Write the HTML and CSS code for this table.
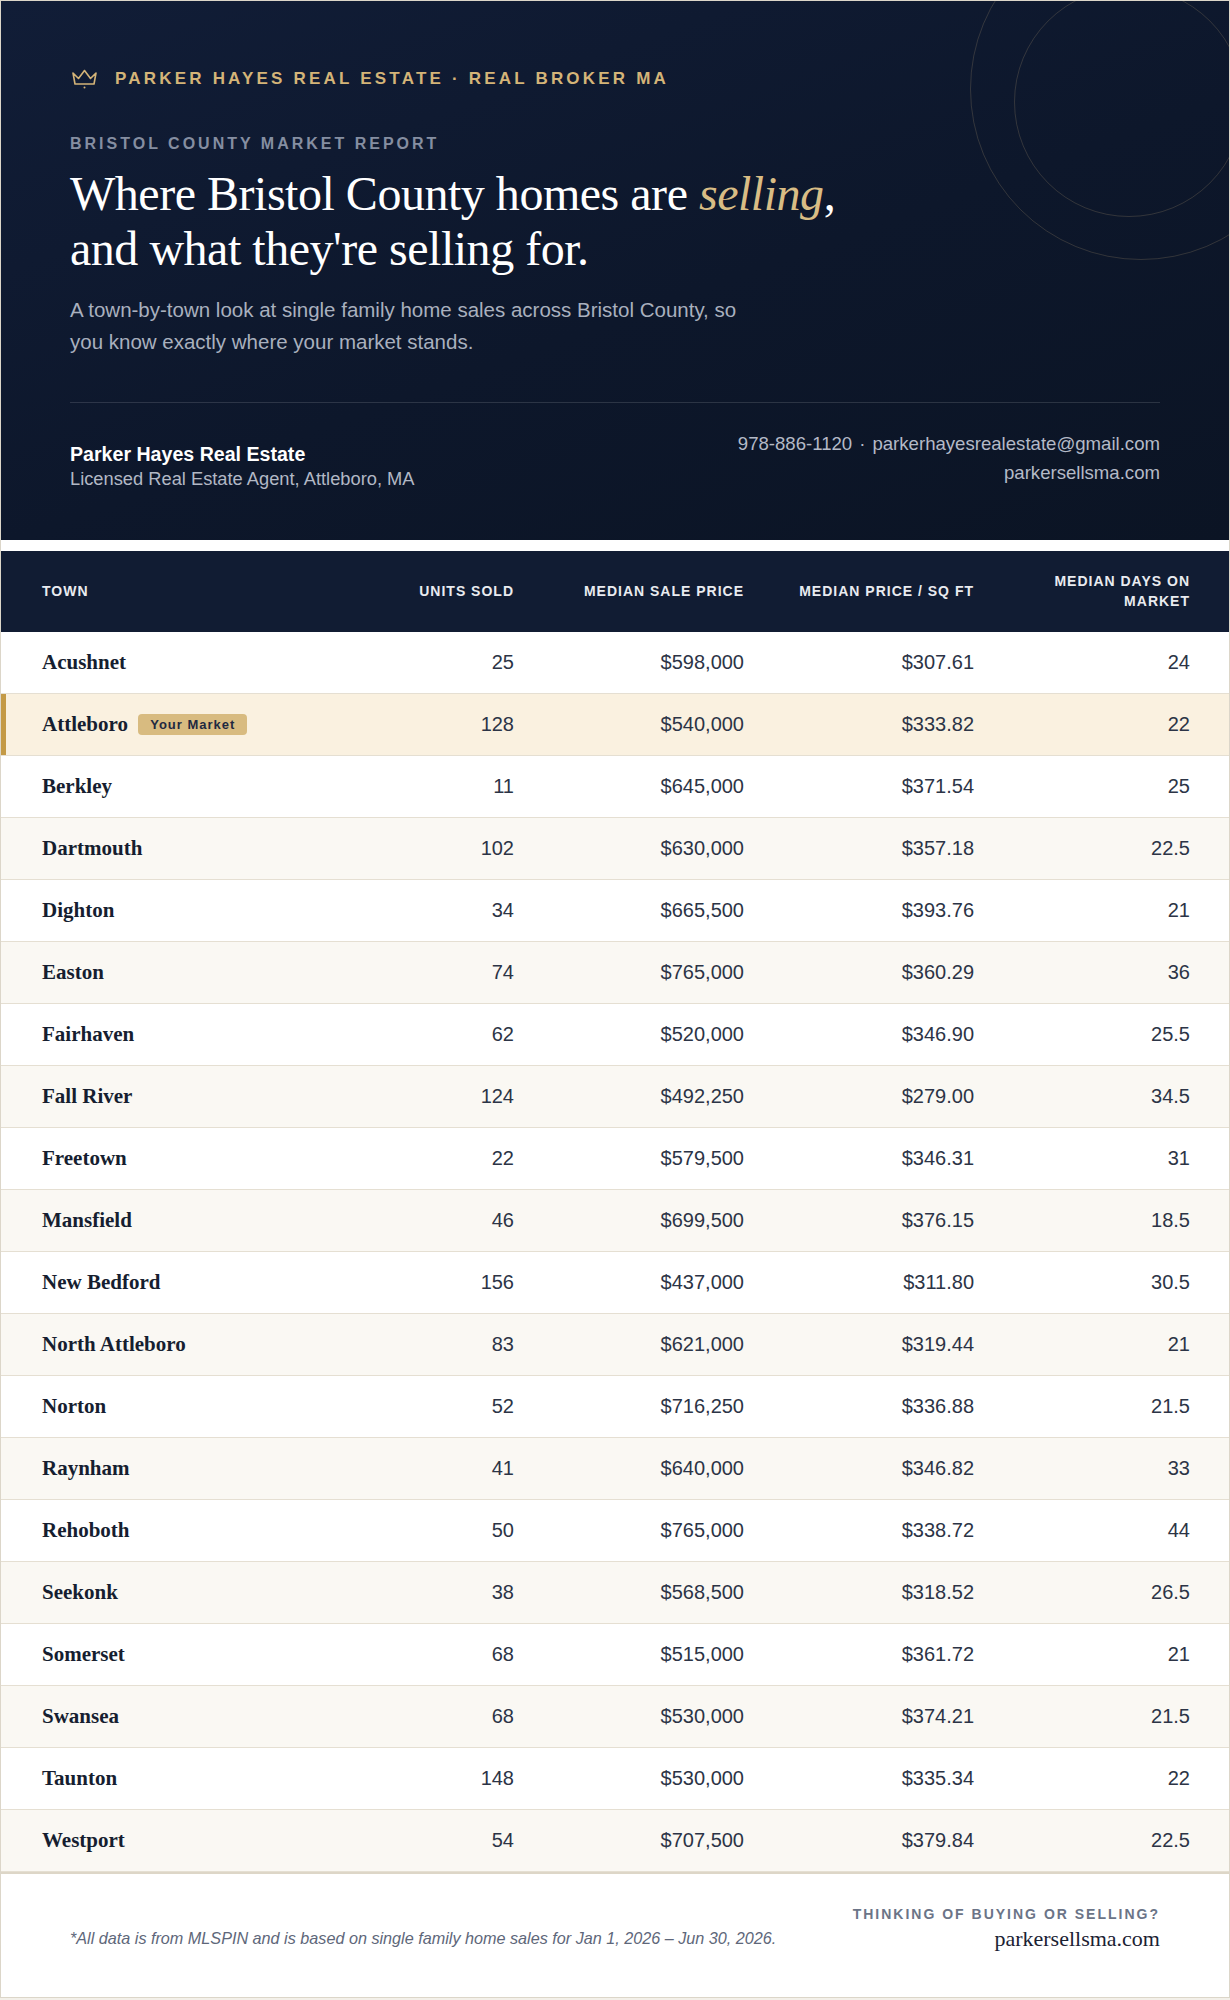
FILE: index.html
```html
<!DOCTYPE html>
<html lang="en">
<head>
<meta charset="utf-8">
<title>Bristol County Market Report — Parker Hayes Real Estate</title>
<link rel="stylesheet" href="styles.css">
</head>
<body>
<main class="report">
  <header class="hero">
    <div class="brand">
      <svg class="crown" width="28" height="20" viewBox="0 0 28 20" aria-hidden="true">
        <path d="M3 4 L8.5 9.5 L14.5 1.5 L20.5 9.5 L26 4 L24 15 H5 Z" fill="none" stroke="#d4b478" stroke-width="1.6" stroke-linejoin="round"/>
        <circle cx="14.5" cy="18.6" r="1" fill="#d4b478"/>
      </svg>
      <span class="brand-name">Parker Hayes Real Estate · Real Broker MA</span>
    </div>
    <p class="eyebrow">Bristol County Market Report</p>
    <h1 class="headline">Where Bristol County homes are <em>selling</em>,<br>and what they're selling for.</h1>
    <p class="lede">A town-by-town look at single family home sales across Bristol County, so you know exactly where your market stands.</p>
    <div class="contact">
      <div class="agent">
        <div class="agent-name">Parker Hayes Real Estate</div>
        <div class="agent-role">Licensed Real Estate Agent, Attleboro, MA</div>
      </div>
      <div class="reach">
        <div>978-886-1120<span class="sep">·</span>parkerhayesrealestate@gmail.com</div>
        <div>parkersellsma.com</div>
      </div>
    </div>
  </header>

  <section class="table-wrap">
    <table class="market">
      <colgroup>
        <col>
        <col class="c-units">
        <col class="c-price">
        <col class="c-sqft">
        <col class="c-days">
      </colgroup>
      <thead>
        <tr>
          <th class="t-town">Town</th>
          <th>Units Sold</th>
          <th>Median Sale Price</th>
          <th>Median Price / Sq Ft</th>
          <th>Median Days on Market</th>
        </tr>
      </thead>
      <tbody>
        <tr><td class="town">Acushnet</td><td>25</td><td>$598,000</td><td>$307.61</td><td>24</td></tr>
        <tr class="mine"><td class="town">Attleboro <span class="badge">Your Market</span></td><td>128</td><td>$540,000</td><td>$333.82</td><td>22</td></tr>
        <tr><td class="town">Berkley</td><td>11</td><td>$645,000</td><td>$371.54</td><td>25</td></tr>
        <tr><td class="town">Dartmouth</td><td>102</td><td>$630,000</td><td>$357.18</td><td>22.5</td></tr>
        <tr><td class="town">Dighton</td><td>34</td><td>$665,500</td><td>$393.76</td><td>21</td></tr>
        <tr><td class="town">Easton</td><td>74</td><td>$765,000</td><td>$360.29</td><td>36</td></tr>
        <tr><td class="town">Fairhaven</td><td>62</td><td>$520,000</td><td>$346.90</td><td>25.5</td></tr>
        <tr><td class="town">Fall River</td><td>124</td><td>$492,250</td><td>$279.00</td><td>34.5</td></tr>
        <tr><td class="town">Freetown</td><td>22</td><td>$579,500</td><td>$346.31</td><td>31</td></tr>
        <tr><td class="town">Mansfield</td><td>46</td><td>$699,500</td><td>$376.15</td><td>18.5</td></tr>
        <tr><td class="town">New Bedford</td><td>156</td><td>$437,000</td><td>$311.80</td><td>30.5</td></tr>
        <tr><td class="town">North Attleboro</td><td>83</td><td>$621,000</td><td>$319.44</td><td>21</td></tr>
        <tr><td class="town">Norton</td><td>52</td><td>$716,250</td><td>$336.88</td><td>21.5</td></tr>
        <tr><td class="town">Raynham</td><td>41</td><td>$640,000</td><td>$346.82</td><td>33</td></tr>
        <tr><td class="town">Rehoboth</td><td>50</td><td>$765,000</td><td>$338.72</td><td>44</td></tr>
        <tr><td class="town">Seekonk</td><td>38</td><td>$568,500</td><td>$318.52</td><td>26.5</td></tr>
        <tr><td class="town">Somerset</td><td>68</td><td>$515,000</td><td>$361.72</td><td>21</td></tr>
        <tr><td class="town">Swansea</td><td>68</td><td>$530,000</td><td>$374.21</td><td>21.5</td></tr>
        <tr><td class="town">Taunton</td><td>148</td><td>$530,000</td><td>$335.34</td><td>22</td></tr>
        <tr><td class="town">Westport</td><td>54</td><td>$707,500</td><td>$379.84</td><td>22.5</td></tr>
      </tbody>
    </table>
  </section>

  <footer class="foot">
    <p class="disclaimer">*All data is from MLSPIN and is based on single family home sales for Jan 1, 2026 – Jun 30, 2026.</p>
    <div class="cta">
      <div class="cta-label">Thinking of buying or selling?</div>
      <div class="cta-link">parkersellsma.com</div>
    </div>
  </footer>
</main>
</body>
</html>
```

FILE: styles.css
```css
* { box-sizing: border-box; }

body {
  margin: 0;
  background: #f3f0e9;
  font-family: "Liberation Sans", Arial, sans-serif;
  color: #1b2233;
}

.report {
  border: 1px solid #dcd6c9;
  background: #ffffff;
}

/* ---------- hero ---------- */
.hero {
  position: relative;
  overflow: hidden;
  padding: 66px 69px 49px;
  background: linear-gradient(160deg, #111d37 0%, #0d172b 55%, #0b1424 100%);
}

.hero::before,
.hero::after {
  content: "";
  position: absolute;
  border-radius: 50%;
  border: 1px solid rgba(205, 175, 125, 0.2);
  pointer-events: none;
}
.hero::before { width: 340px; height: 340px; top: -83px; right: -83px; }
.hero::after  { width: 228px; height: 228px; top: -14px; right: -15px; }

.brand {
  display: flex;
  align-items: center;
  gap: 17px;
  height: 24px;
}
.crown { display: block; flex: none; }
.brand-name {
  font-size: 17px;
  line-height: 24px;
  font-weight: 700;
  letter-spacing: 3.2px;
  text-transform: uppercase;
  color: #d4b478;
}

.eyebrow {
  margin: 43px 0 0;
  font-size: 16px;
  line-height: 20px;
  font-weight: 700;
  letter-spacing: 3px;
  text-transform: uppercase;
  color: #858ea1;
}

.headline {
  margin: 12px 0 0;
  font-family: "Liberation Serif", "Times New Roman", serif;
  font-weight: 400;
  font-size: 48px;
  line-height: 1.15;
  letter-spacing: -0.01em;
  color: #ffffff;
}
.headline em {
  font-style: italic;
  color: #d9bd85;
}

.lede {
  margin: 18px 0 0;
  max-width: 690px;
  font-size: 20.5px;
  line-height: 32px;
  color: #a9b0be;
}

.contact {
  margin-top: 44px;
  padding-top: 27px;
  border-top: 1px solid rgba(255, 255, 255, 0.13);
  display: flex;
  justify-content: space-between;
  align-items: flex-end;
}
.agent-name {
  font-size: 19.6px;
  line-height: 25px;
  font-weight: 700;
  color: #ffffff;
}
.agent-role {
  font-size: 18.3px;
  line-height: 24px;
  color: #b2b8c5;
}
.reach {
  text-align: right;
  font-size: 18.6px;
  line-height: 28.8px;
  color: #b4bac7;
  padding-bottom: 3px;
}
.sep { margin: 0 7px; }

/* ---------- table ---------- */
.table-wrap { padding-top: 11px; }

.market {
  width: 100%;
  table-layout: fixed;
  border-collapse: separate;
  border-spacing: 0;
}
.c-units { width: 150px; }
.c-price { width: 230px; }
.c-sqft  { width: 230px; }
.c-days  { width: 238px; }

.market th {
  background: #111c33;
  color: #e9ebf0;
  font-size: 14px;
  line-height: 20px;
  font-weight: 700;
  letter-spacing: 1px;
  text-transform: uppercase;
  text-align: right;
  padding: 20px 17px 21px 20px;
  vertical-align: middle;
}
.market th.t-town { text-align: left; }

.market td {
  height: 62px;
  padding: 0 17px 0 20px;
  text-align: right;
  vertical-align: middle;
  font-size: 20px;
  color: #2c3446;
  border-bottom: 1px solid #e5dfd2;
  white-space: nowrap;
}
.market th:first-child,
.market td:first-child { padding-left: 41px; text-align: left; }
.market th:last-child,
.market td:last-child { padding-right: 39px; }

.market td.town {
  font-family: "Liberation Serif", "Times New Roman", serif;
  font-weight: 700;
  font-size: 21px;
  color: #161e30;
}

.market tbody tr:nth-child(even) td { background: #faf8f3; }
.market tbody tr.mine td { background: #faf1e0; }
.market tbody tr.mine td:first-child { box-shadow: inset 5px 0 0 #c49a46; }

.badge {
  display: inline-block;
  vertical-align: middle;
  margin-left: 5px;
  padding: 3px 12px;
  border-radius: 4px;
  background: #d8bb80;
  color: #1f2940;
  font-family: "Liberation Sans", Arial, sans-serif;
  font-size: 13px;
  line-height: 15px;
  font-weight: 700;
  letter-spacing: 1px;
  position: relative;
  top: -2px;
}

/* ---------- footer ---------- */
.foot {
  border-top: 2px solid #ddd6c7;
  padding: 30px 69px 44px;
  display: flex;
  justify-content: space-between;
  align-items: flex-end;
}
.disclaimer {
  margin: 0 0 3px;
  font-size: 16.2px;
  line-height: 24px;
  font-style: italic;
  color: #5e677a;
}
.cta { text-align: right; }
.cta-label {
  font-size: 14px;
  line-height: 20px;
  font-weight: 700;
  letter-spacing: 2px;
  text-transform: uppercase;
  color: #6b7487;
}
.cta-link {
  font-family: "Liberation Serif", "Times New Roman", serif;
  font-size: 22px;
  line-height: 29px;
  color: #1b2233;
}
```
